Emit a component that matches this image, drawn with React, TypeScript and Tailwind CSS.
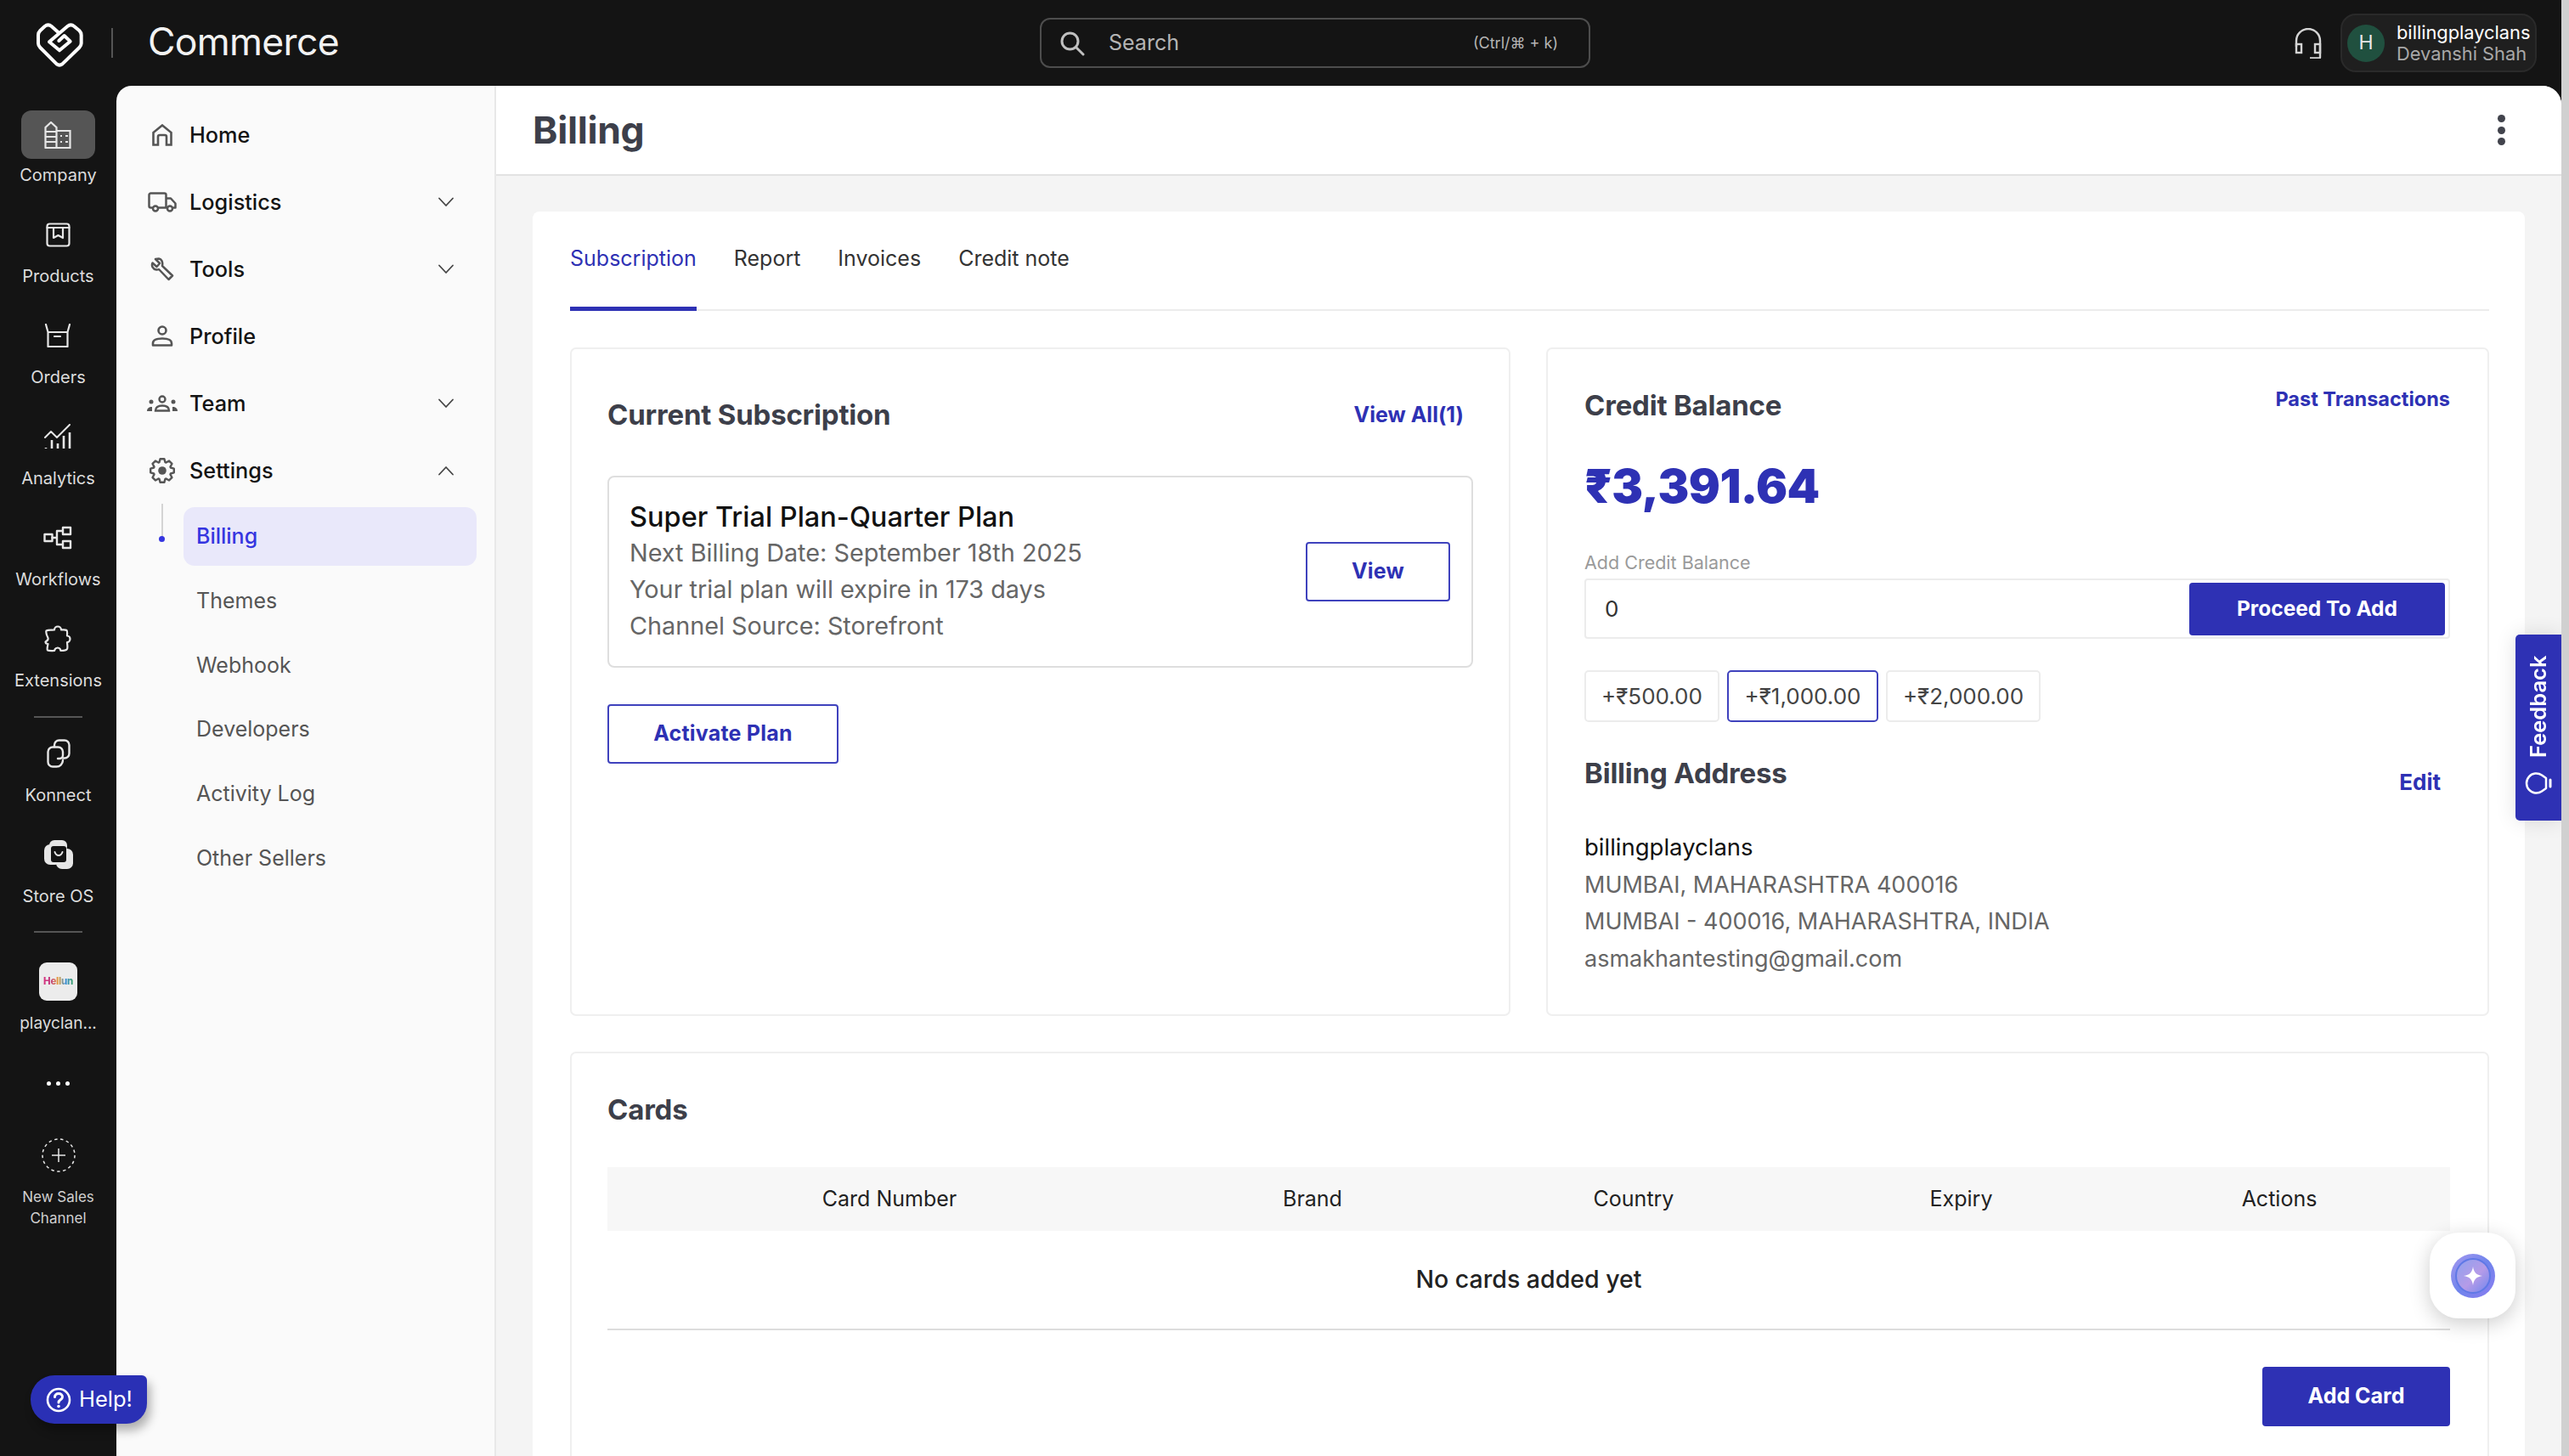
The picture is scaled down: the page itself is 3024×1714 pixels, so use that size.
import React from "react";

const Ic = ({ w, h, vb, children, sw = 2, c = "#e6e6e6", className = "" }: any) => (
  <svg width={w} height={h} viewBox={vb} fill="none" stroke={c} strokeWidth={sw} strokeLinejoin="round" strokeLinecap="round" className={className}>
    {children}
  </svg>
);

const Logo = () => (
  <svg width="80" height="70" viewBox="0 0 240 210" fill="none" stroke="#fff" strokeWidth="12" strokeLinejoin="round" strokeLinecap="round">
    <path d="M118 68 92 45Q80 35 68 45L52 60Q45 67 45 76V105Q45 113 52 120L110 178Q120 186 130 178L190 120Q197 113 197 105V76Q197 67 190 60L172 45Q160 35 148 45L84 100 120 130 158 98 137 78 118 96" />
  </svg>
);

const railIcons: Record<string, React.ReactNode> = {
  Company: (
    <Ic w={32} h={32} vb="0 0 32 32" sw={2.2}>
      <path d="M1.500 31V7l6.500-6 6.500 6v24M14.500 11h16v20h-29" strokeLinejoin="miter" />
      <path d="M2 12h12M2 18h12M2 24h12" strokeWidth="2" strokeLinecap="butt" />
      <path d="M19 17h2M25 17h3M19 24h2M25 24h3" strokeLinecap="butt" strokeWidth="2.200" />
    </Ic>
  ),
  Products: (
    <Ic w={29} h={29} vb="0 0 29 29" sw={2.2}>
      <rect x="1.500" y="1.500" width="26" height="26" rx="3" />
      <path d="M1.500 6h26M9 6v12l5.500-3 5.500 3V6" />
    </Ic>
  ),
  Orders: (
    <Ic w={32} h={28} vb="0 0 32 28" sw={2.2}>
      <path d="M4.500 10h23v17h-23zM4.500 10 2 1M27.500 10 30 1M12 15h7" />
    </Ic>
  ),
  Analytics: (
    <Ic w={32} h={30} vb="0 0 32 30" sw={2}>
      <path d="M1 16 8 9l7 7L30 1" />
      <path d="M2 28v1M9 19v10M16 23v6M23 14v15M30 10v19" strokeWidth="2.600" strokeLinecap="butt" />
    </Ic>
  ),
  Workflows: (
    <Ic w={34} h={28} vb="0 0 34 28" sw={2.4}>
      <rect x="1.500" y="10" width="9" height="8" />
      <rect x="23" y="2" width="9" height="8" />
      <rect x="23" y="18" width="9" height="8" />
      <path d="M10.500 14H16V6h7M16 14v8h7" />
    </Ic>
  ),
  Extensions: (
    <Ic w={32} h={32} vb="0 0 32 32" sw={2.2}>
      <path d="M12 5.500C12 3 14 1.500 16 1.500s4 1.500 4 4c2 0 5-.5 6.500.5 1 1 .5 4.500.5 6.500 2.500 0 3.500 2 3.500 3.500s-1 4-3.500 4c0 2 1 6 0 8s-5 2-7.500 2c-.5-2.500-2-3.500-3.500-3.500s-3.500 1-4 3.500c-2.500 0-6 .5-8-.5-1-1.500 0-5 .5-7.500-2.500 0-3-1-3-2.500 2-1 3.500-3 3-4.500C3 12 2 8 2.500 6.500 5 5 9 6 12 5.500Z" />
    </Ic>
  ),
  Konnect: (
    <Ic w={28} h={34} vb="0 0 28 34" sw={2.4}>
      <path d="M9 9V7a5.500 5.500 0 0 1 5.500-5.500H21A5.500 5.500 0 0 1 26.500 7v10a5.500 5.500 0 0 1-5.500 5.500h-2" />
      <path d="M19 25a7.500 7.500 0 0 1-7.500 7.500H7A5.500 5.500 0 0 1 1.500 27V15A5.500 5.500 0 0 1 7 9.500h6.500a5.500 5.500 0 0 1 5.500 5.500v4a4 4 0 0 1-4 4h-2" />
    </Ic>
  ),
};

const StoreOs = () => (
  <svg width="34" height="34" viewBox="0 0 34 34" fill="none">
    <rect x="0" y="5" width="20" height="24" rx="7" fill="#e6e6e6" />
    <rect x="6" y="0" width="21" height="14" rx="6" fill="#e6e6e6" />
    <rect x="14" y="10" width="20" height="24" rx="7" fill="#e6e6e6" />
    <rect x="8" y="7" width="18" height="19" rx="3" fill="#141414" />
    <path d="M12.500 14c1 3 3 4 4.500 4s3.500-1 4.500-4" stroke="#e6e6e6" strokeWidth="2" strokeLinecap="round" />
  </svg>
);

const RailItem = ({ label, active = false, children }: any) => (
  <div className="flex flex-col items-center">
    <div className={`w-[87px] h-[57px] rounded-[12px] flex items-center justify-center ${active ? "bg-[#555555]" : "pb-[3px]"}`}>{children}</div>
    <div className="mt-[6px] h-[26px] leading-[26px] text-[20px] text-[#dcdcdc] whitespace-nowrap">{label}</div>
  </div>
);

const Rail = () => (
  <div className="w-[137px] shrink-0 flex flex-col items-center pt-[29px]">
    <div className="flex flex-col gap-[30px]">
      {["Company", "Products", "Orders", "Analytics", "Workflows", "Extensions"].map((n, i) => (
        <RailItem key={n} label={n} active={i === 0}>{railIcons[n]}</RailItem>
      ))}
    </div>
    <div className="w-[57px] h-[2px] bg-[#555555] mt-[29px] mb-[15px]" />
    <div className="flex flex-col gap-[30px]">
      <RailItem label="Konnect">{railIcons.Konnect}</RailItem>
      <RailItem label="Store OS"><StoreOs /></RailItem>
    </div>
    <div className="w-[57px] h-[2px] bg-[#555555] mt-[28px]" />
    <div className="mt-[35px] w-[45px] h-[45px] rounded-[9px] bg-[#ececec] flex items-center justify-center">
      <span className="text-[11.500px] font-extrabold leading-none tracking-[-0.3px] bg-[linear-gradient(90deg,#d6317f,#c0397f,#e8a33a,#3b8fd8,#3fa36a)] bg-clip-text text-transparent">Hellun</span>
    </div>
    <div className="mt-[14px] h-[26px] leading-[26px] text-[19px] text-[#dcdcdc]">playclan...</div>
    <div className="mt-[55px] flex gap-[6px]">
      <span className="w-[5px] h-[5px] rounded-full bg-white" />
      <span className="w-[5px] h-[5px] rounded-full bg-white" />
      <span className="w-[5px] h-[5px] rounded-full bg-white" />
    </div>
    <div className="mt-[62px]">
      <svg width="40" height="40" viewBox="0 0 40 40" fill="none" stroke="#e6e6e6">
        <circle cx="20" cy="20" r="19" strokeWidth="1.500" strokeDasharray="3.500 3.500" />
        <path d="M20 12v16M12 20h16" strokeWidth="1.500" />
      </svg>
    </div>
    <div className="mt-[17px] text-center text-[17px] leading-[25px] text-[#d0d0d0]">New Sales<br />Channel</div>
  </div>
);

const Chevron = ({ up = false }: { up?: boolean }) => (
  <svg width="20" height="12" viewBox="0 0 20 12" fill="none" stroke="#444" strokeWidth="1.800" strokeLinecap="round" strokeLinejoin="round">
    <path d={up ? "M2 10.500 10 2l8 8.500" : "M2 1.500 10 10l8-8.500"} />
  </svg>
);

const gearPoints = Array.from({ length: 8 })
  .flatMap((_, i) => {
    const a = (i * Math.PI) / 4;
    const d = 0.24;
    const d2 = 0.17;
    const p = (r: number, t: number) => `${(15 + r * Math.sin(t)).toFixed(2)},${(15 - r * Math.cos(t)).toFixed(2)}`;
    return [p(10.5, a - d - 0.1), p(14, a - d2), p(14, a + d2), p(10.5, a + d + 0.1)];
  })
  .join(" ");

const ni = "#555555";
const navIcons: Record<string, React.ReactNode> = {
  Home: (
    <Ic w={24} h={26} vb="0 0 24 26" c={ni} sw={2.600}>
      <path d="M1.500 24.500V10L12 1.500 22.500 10v14.500H17V15a2 2 0 0 0-2-2H9a2 2 0 0 0-2 2v9.500H1.500Z" strokeLinejoin="miter" />
    </Ic>
  ),
  Logistics: (
    <Ic w={34} h={24} vb="0 0 34 24" c={ni} sw={2.500}>
      <path d="M5.500 18.500H3.500a2 2 0 0 1-2-2V3.500a2 2 0 0 1 2-2h16a2 2 0 0 1 2 2v15H12.500M21.500 7.500H27l5.500 6v5h-3M21.500 18.500h1" />
      <circle cx="9" cy="19.500" r="3" />
      <circle cx="26" cy="19.500" r="3" />
    </Ic>
  ),
  Tools: (
    <Ic w={28} h={28} vb="0 0 28 28" c={ni} sw={2.500}>
      <path d="M10 1.500 6 2l5 5-3.500 4-5-4.500C1 10 3 14 7 14.500c1 .1 2 0 3-.5l11.500 12 4.500-4.500L14 10c1-5-1-8-4-8.500Z" />
    </Ic>
  ),
  Profile: (
    <Ic w={26} h={25} vb="0 0 26 25" c={ni} sw={2.600}>
      <circle cx="13" cy="6" r="4.500" />
      <path d="M2 23.500V21c0-3 3-5.500 11-5.500S24 18 24 21v2.500H2Z" />
    </Ic>
  ),
  Team: (
    <svg width="36" height="20" viewBox="0 0 36 20" fill="none" stroke={ni} strokeWidth="2.400">
      <circle cx="18" cy="5" r="3.500" />
      <path d="M10 18.500c0-4 3-6 8-6s8 2 8 6H10Z" />
      <circle cx="5" cy="8" r="2.500" fill={ni} stroke="none" />
      <circle cx="31" cy="8" r="2.500" fill={ni} stroke="none" />
      <path d="M0 19c0-3 2-5 6-5v5H0ZM36 19c0-3-2-5-6-5v5h6Z" fill={ni} stroke="none" />
    </svg>
  ),
  Settings: (
    <svg width="30" height="30" viewBox="0 0 30 30" fill="none" stroke={ni} strokeWidth="2.400" strokeLinejoin="round">
      <polygon points={gearPoints} />
      <circle cx="15" cy="15" r="4.800" fill={ni} stroke="none" />
    </svg>
  ),
};

const NavRow = ({ label, chev, up }: any) => (
  <div className="h-[79px] flex items-center pl-[34px] pr-[47px] text-[#141414] text-[25.300px]">
    <div className="w-[40px] flex justify-center shrink-0">{navIcons[label]}</div>
    <div className="ml-[12px] flex-1 font-[450]">{label}</div>
    {chev && <Chevron up={up} />}
  </div>
);

const Nav = () => (
  <div className="w-[447px] shrink-0 bg-[#fafafa] rounded-tl-[18px] border-r-2 border-[#e8e8e8] pt-[18px]">
    <NavRow label="Home" />
    <NavRow label="Logistics" chev />
    <NavRow label="Tools" chev />
    <NavRow label="Profile" />
    <NavRow label="Team" chev />
    <NavRow label="Settings" chev up />
    <div className="relative flex flex-col pl-[79px] pr-[21px] text-[25px] text-[#555555]">
      <div className="absolute left-[53px] top-0 w-[2px] h-[44px] bg-[#d4d4d4]" />
      <div className="absolute left-[50px] top-[38px] w-[7px] h-[7px] rounded-full bg-[#3535e0]" />
      <div className="mt-[4px] h-[69px] rounded-[13px] bg-[#e9e8fa] text-[#3535e0] font-medium text-[25px] flex items-center pl-[15px]">Billing</div>
      {["Themes", "Webhook", "Developers", "Activity Log", "Other Sellers"].map((t, i) => (
        <div key={t} className={`h-[75.700px] flex items-center pl-[15px] ${i === 0 ? "mt-[4px]" : ""}`}>{t}</div>
      ))}
    </div>
  </div>
);

const SectionTitle = ({ children }: any) => <div className="text-[33px] font-[650] text-[#3d3f4a] tracking-[-0.2px] leading-none">{children}</div>;
const LinkText = ({ children, className = "" }: any) => <div className={`font-[650] text-[#2e31b4] leading-none ${className}`}>{children}</div>;

const Outline = ({ children, w }: any) => (
  <div className={`${w} h-[70px] rounded-[4px] border-2 border-[#3f42bd] flex items-center justify-center text-[25px] font-[650] tracking-[0.2px] text-[#2e31b4]`}>{children}</div>
);

const Subscription = () => (
  <div className="w-[1107px] h-[787px] border-2 border-[#efefef] rounded-[7px] px-[42px] flex flex-col">
    <div className="flex items-center justify-between pt-[61px] pr-[11px]">
      <SectionTitle>Current Subscription</SectionTitle>
      <LinkText className="text-[25px]">View All(1)</LinkText>
    </div>
    <div className="mt-[55px] h-[226px] border-2 border-[#dedede] rounded-[8px] pl-[24px] pr-[25px] flex items-center justify-between">
      <div className="flex flex-col">
        <div className="text-[32.500px] font-medium text-[#111111] leading-[42px]">Super Trial Plan-Quarter Plan</div>
        <div className="text-[28.800px] text-[#666666] leading-[43px] -mt-[1px]">Next Billing Date: September 18th 2025</div>
        <div className="text-[28.800px] text-[#666666] leading-[43px]">Your trial plan will expire in 173 days</div>
        <div className="text-[28.800px] text-[#666666] leading-[43px]">Channel Source: Storefront</div>
      </div>
      <Outline w="w-[170px]">View</Outline>
    </div>
    <div className="mt-[43px]"><Outline w="w-[272px]">Activate Plan</Outline></div>
  </div>
);

const chipsBase = "h-[61px] rounded-[5px] flex items-center justify-center text-[26px] text-[#444444]";

const Credit = () => (
  <div className="w-[1110px] h-[787px] border-2 border-[#efefef] rounded-[7px] pl-[43px] pr-[44px] flex flex-col">
    <div className="flex justify-between items-start pt-[50px]">
      <SectionTitle>Credit Balance</SectionTitle>
      <LinkText className="text-[23.500px] mt-[-3px]">Past Transactions</LinkText>
    </div>
    <div className="mt-[43px] text-[55px] leading-[70px] font-black text-[#2e31b4] tracking-[-0.5px]">₹3,391.64</div>
    <div className="mt-[42px] text-[21.500px] leading-[26px] text-[#9a9a9a]">Add Credit Balance</div>
    <div className="mt-[6px] h-[71px] border-2 border-[#ececec] rounded-[4px] flex items-center justify-between pl-[22px] pr-[4px]">
      <span className="text-[26px] text-[#333333]">0</span>
      <div className="w-[301px] h-[62px] rounded-[4px] bg-[#2e31b4] text-white text-[24.500px] font-bold flex items-center justify-center">Proceed To Add</div>
    </div>
    <div className="mt-[37px] flex gap-[9px]">
      <div className={`${chipsBase} w-[159px] border-2 border-[#ececec]`}>+₹500.00</div>
      <div className={`${chipsBase} w-[178px] border-2 border-[#3f42bd]`}>+₹1,000.00</div>
      <div className={`${chipsBase} w-[182px] border-2 border-[#ececec]`}>+₹2,000.00</div>
    </div>
    <div className="mt-[44px] flex justify-between items-start pr-[11px]">
      <SectionTitle>Billing Address</SectionTitle>
      <LinkText className="text-[26px] mt-[14px]">Edit</LinkText>
    </div>
    <div className="mt-[42px] text-[27px] leading-[43.500px] text-[#666666]">
      <div className="text-[#111111] text-[27.500px]">billingplayclans</div>
      <div>MUMBAI, MAHARASHTRA 400016</div>
      <div>MUMBAI - 400016, MAHARASHTRA, INDIA</div>
      <div>asmakhantesting@gmail.com</div>
    </div>
  </div>
);

const Cards = () => (
  <div className="mt-[42px] w-[2259px] border-2 border-[#efefef] rounded-[7px] pl-[42px] pr-[44px] pt-[50px] pb-[40px]">
    <SectionTitle>Cards</SectionTitle>
    <div className="mt-[51px] h-[75px] bg-[#f7f7f7] grid grid-cols-[664px_332px_424px_347px_402px] items-center text-center text-[25px] text-[#222222]">
      <div>Card Number</div>
      <div>Brand</div>
      <div>Country</div>
      <div>Expiry</div>
      <div>Actions</div>
    </div>
    <div className="h-[117px] border-b-2 border-[#dddddd] flex items-center justify-center text-[28.500px] text-[#222222] font-[450]">No cards added yet</div>
    <div className="mt-[43px] flex justify-end">
      <div className="w-[221px] h-[70px] rounded-[4px] bg-[#2e31b4] text-white text-[25px] font-bold flex items-center justify-center">Add Card</div>
    </div>
  </div>
);

const Main = () => (
  <div className="relative flex-1 min-w-0 bg-[#f4f4f4] rounded-tr-[22px] overflow-hidden">
    <div className="h-[106px] bg-white border-b-2 border-[#e2e2e2] flex items-center justify-between pl-[43px] pr-[66px]">
      <div className="text-[44.500px] font-[650] text-[#3d3f4a] tracking-[-0.3px]">Billing</div>
      <div className="flex flex-col gap-[4.500px]">
        <span className="w-[9px] h-[9px] rounded-full bg-[#41434c]" />
        <span className="w-[9px] h-[9px] rounded-full bg-[#41434c]" />
        <span className="w-[9px] h-[9px] rounded-full bg-[#41434c]" />
      </div>
    </div>
    <div className="ml-[43px] mt-[42px] w-[2345px] bg-white rounded-t-[8px] pl-[44px] pr-[42px] pb-[40px]">
      <div className="h-[117px] border-b-2 border-[#ececec] flex gap-[44px] text-[25px] text-[#333333]">
        <div className="h-[117px] pt-[37px] border-b-[5px] border-[#2e31b4] text-[#2e31b4] leading-[36px]">Subscription</div>
        <div className="pt-[37px] leading-[36px]">Report</div>
        <div className="pt-[37px] leading-[36px]">Invoices</div>
        <div className="pt-[37px] leading-[36px]">Credit note</div>
      </div>
      <div className="mt-[43px] flex gap-[42px]">
        <Subscription />
        <Credit />
      </div>
      <Cards />
    </div>
    <div className="absolute left-[2377px] top-[646px] w-[54px] h-[219px] bg-[#2e31b4] rounded-l-[5px] shadow-[0_0_24px_rgba(0,0,0,0.12)] flex flex-col items-center pt-[26px] text-white">
      <div className="[writing-mode:vertical-rl] rotate-180 text-[25.500px] font-semibold leading-none h-[117px] flex items-center justify-center">Feedback</div>
      <svg className="mt-[17px]" width="34" height="30" viewBox="0 0 34 30" fill="none" stroke="#fff" strokeWidth="2.500" strokeLinecap="round" strokeLinejoin="round">
        <path d="M21 5.500a11.500 11.500 0 1 0 0 19l5-3.500V9l-5-3.500Z" />
        <path d="M31 11v8" strokeWidth="3" />
      </svg>
    </div>
    <div className="absolute left-[2276px] top-[1350px] w-[101px] h-[101px] rounded-[34px] bg-white shadow-[0_6px_24px_rgba(0,0,0,0.2)] flex items-center justify-center">
      <svg width="54" height="54" viewBox="0 0 54 54">
        <defs>
          <linearGradient id="g1" x1="0" y1="0" x2="1" y2="1">
            <stop offset="0" stopColor="#a79af0" />
            <stop offset=".5" stopColor="#6f84ec" />
            <stop offset="1" stopColor="#8b7df0" />
          </linearGradient>
          <linearGradient id="g2" x1="0" y1="0" x2="1" y2="1">
            <stop offset="0" stopColor="#8ea2ee" />
            <stop offset=".55" stopColor="#b59be8" />
            <stop offset="1" stopColor="#6f86ee" />
          </linearGradient>
        </defs>
        <circle cx="27" cy="27" r="26" fill="url(#g1)" />
        <circle cx="27" cy="27" r="20" fill="url(#g2)" stroke="#5f78e6" strokeWidth="2" />
        <path d="M27 16c1 7 4 10 11 11-7 1-10 4-11 11-1-7-4-10-11-11 7-1 10-4 11-11Z" fill="#fff" />
      </svg>
    </div>
  </div>
);

const TopBar = () => (
  <div className="h-[101px] flex items-center relative">
    <div className="ml-[30px] shrink-0"><Logo /></div>
    <div className="w-[2px] h-[35px] bg-[#555555] ml-[21px]" />
    <div className="ml-[41px] text-[44.500px] text-[#f2f2f2] leading-none tracking-[-0.7px] -mt-[2px]">Commerce</div>
    <div className="absolute left-[1224px] top-[21px] w-[648px] h-[59px] border-2 border-[#4d4d4d] rounded-[12px] flex items-center pl-[21px] pr-[36px]">
      <svg width="30" height="30" viewBox="0 0 30 30" fill="none" stroke="#c0c0c0" strokeWidth="3">
        <circle cx="12.500" cy="12.500" r="9.500" />
        <path d="m20 20 8 8" strokeLinecap="round" />
      </svg>
      <span className="ml-[28px] text-[25px] text-[#b4b4b4] flex-1">Search</span>
      <span className="text-[18px] text-[#b4b4b4]">(Ctrl/⌘ + k)</span>
    </div>
    <div className="ml-auto flex items-center pr-[29px]">
      <svg width="32" height="36" viewBox="0 0 32 36" fill="none" stroke="#d4d4d4" strokeWidth="2.400">
        <path d="M2 22V15a14 14 0 0 1 28 0v19.500a1 1 0 0 1-1 1H18" />
        <rect x="2" y="19" width="6" height="10" />
        <rect x="24" y="19" width="6" height="10" />
      </svg>
      <div className="ml-[22px] w-[231px] h-[69px] rounded-[18px] bg-[#1f1f1f] border-2 border-[#2a2a2a] flex items-center pl-[6px]">
        <div className="w-[44px] h-[44px] shrink-0 rounded-full bg-[#20503f] text-[#e8e8e8] text-[23px] flex items-center justify-center">H</div>
        <div className="ml-[14px] flex flex-col">
          <span className="text-[21.800px] leading-[26px] text-white whitespace-nowrap">billingplayclans</span>
          <span className="text-[21.800px] leading-[25px] text-[#a8a8a8] whitespace-nowrap">Devanshi Shah</span>
        </div>
      </div>
    </div>
  </div>
);

export default function App() {
  return (
    <div className="w-[3024px] h-[1714px] overflow-hidden flex bg-[#141414] font-['Inter',sans-serif]">
      <div className="relative w-[3015px] h-[1714px] flex flex-col">
        <TopBar />
        <div className="flex-1 min-h-0 flex">
          <Rail />
          <Nav />
          <Main />
        </div>
        <div className="absolute left-[36px] top-[1619px] w-[137px] h-[57px] rounded-l-[28px] rounded-tr-[6px] rounded-br-[24px] bg-[#2a30b5] shadow-[4px_8px_12px_rgba(0,0,0,0.3)] flex items-center pl-[18px] text-white text-[25.500px]">
          <svg width="30" height="30" viewBox="0 0 30 30" fill="none" stroke="#fff" strokeWidth="2.600" strokeLinecap="round">
            <circle cx="15" cy="15" r="13" />
            <path d="M10.500 11.500c0-2.500 2-4 4.500-4s4.500 1.500 4.500 4c0 3.500-4.500 3-4.500 6.500" strokeWidth="3" />
            <circle cx="15" cy="22.500" r="1.800" fill="#fff" stroke="none" />
          </svg>
          <span className="ml-[9px]">Help!</span>
        </div>
      </div>
      <div className="w-[9px] h-[1714px] bg-[#d0d0d0]" />
    </div>
  );
}
